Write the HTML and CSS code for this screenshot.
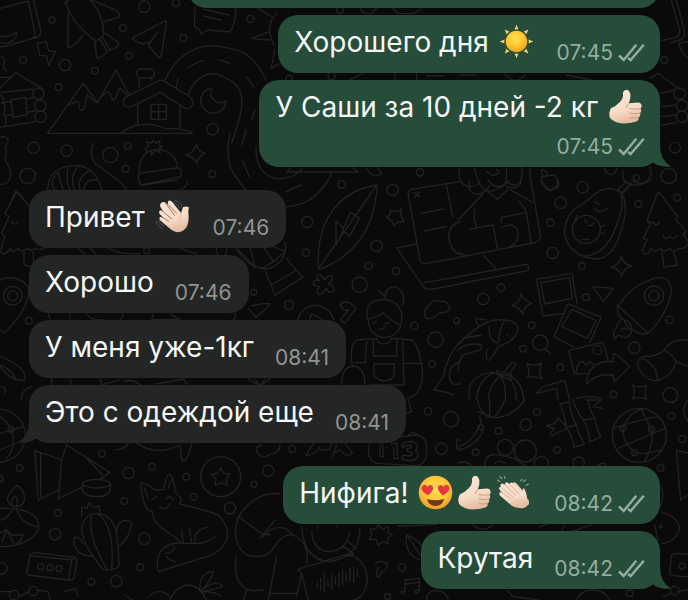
FILE: index.html
```html
<!DOCTYPE html>
<html lang="ru">
<head>
<meta charset="utf-8">
<meta name="viewport" content="width=device-width, initial-scale=1">
<title>Чат</title>
<link rel="stylesheet" href="styles.css">
</head>
<body>

<!-- Wallpaper doodles, grouped by region; each group is drawn on a 3x grid -->
<svg class="wallpaper" viewBox="0 0 688 600" preserveAspectRatio="xMidYMin slice" aria-hidden="true">
<g transform="scale(.3333)">
<path d="M0 25L85 3L105 100Q107 112 95 116L20 138Q5 142 0 138M100 0L122 90Q124 110 108 113L90 118M0 108Q30 115 50 95Q50 125 20 130L0 128M111 130L138 124L146 152L166 154L147 197L139 168L120 166Z"/>
<path d="M197 0Q205 60 285 122M310 100Q310 40 270 0M205 40L203 140Q215 150 250 105M275 0L350 32Q365 45 355 52L310 66M285 125L290 172Q300 178 322 155L300 118M308 112L330 152M318 100L355 128Q358 145 328 150M285 122Q300 122 314 100M195 10L208 0"/>
<path d="M497 62L398 113Q398 122 430 132L450 125L472 98L445 135L475 172Q483 172 485 162L499 68Q500 62 497 62M585 20L583 80Q590 85 598 88L603 102L625 90L690 96M612 28L686 45M610 48L662 60"/>
<path d="M142 400L250 250L293 308L348 210L388 285M205 315L220 310Q240 295 237 325Q245 335 252 325L262 285Q275 300 293 308M305 290Q322 270 330 280Q338 310 346 295L360 265L385 288M142 400H578Q550 382 500 387Q440 360 385 385L360 400"/>
<rect x="410" y="207" width="53" height="27" rx="12"/><path d="M417 235V262M455 235V242M475 243Q485 238 500 248L570 290Q588 310 570 324Q560 330 545 318L480 277L395 320Q375 325 370 308Q368 295 385 287ZM413 313V375M540 318V382M453 313H499V358H453ZM476 313V358M453 335H499"/>
<path d="M495 240Q540 140 640 137L690 145M565 285Q590 215 650 222L690 240M565 203Q590 185 612 182M660 180L690 190M535 235L528 262M630 265A38 38 0 1 0 678 302A28 28 0 0 1 637 265"/>
<path d="M0 265L47 218L130 268M0 232H33M0 278L98 267M0 382L107 365M5 310L35 303M78 298L100 293M15 347L40 343M82 337L105 333M33 300L76 292L82 343L40 352ZM5 170Q20 180 10 195Q10 205 20 212M0 285Q15 290 8 308Q22 320 10 342Q25 355 15 375"/>
<path d="M0 412Q25 405 25 425Q10 440 20 455Q10 475 22 490Q40 520 25 545Q15 555 0 552M35 600L47 573L72 600M280 430Q265 460 285 490L340 530Q370 550 380 570M690 400Q678 450 690 500"/>
<path d="M143 570Q145 495 235 497Q290 505 305 570M165 570Q145 545 175 517Q180 545 190 570M205 500Q195 540 210 570M238 497Q205 530 225 570M270 512Q230 530 240 570M290 540Q255 535 252 570"/>
<path d="M417 515Q418 450 475 448Q530 455 532 505M417 520L535 503Q548 508 543 530L425 555Q412 550 417 520M437 445L447 438L440 425L456 430L460 420L468 430L480 422L478 435L488 440L476 446L480 458L465 452L455 465L452 452L440 456ZM540 570Q560 560 563 545M590 432Q592 455 616 460Q595 468 590 490Q580 468 557 465Q582 458 590 432"/>
<circle cx="115" cy="281" r="17"/><circle cx="121" cy="317" r="17"/><circle cx="122" cy="350" r="17"/><circle cx="156" cy="60" r="9"/><circle cx="369" cy="84" r="10"/><circle cx="433" cy="20" r="17"/><circle cx="528" cy="8" r="11"/><circle cx="550" cy="114" r="10"/><circle cx="387" cy="167" r="10"/><circle cx="69" cy="180" r="10"/><circle cx="195" cy="195" r="17"/><circle cx="285" cy="212" r="10"/><circle cx="176" cy="262" r="10"/><circle cx="101" cy="443" r="17"/><circle cx="200" cy="452" r="17"/><circle cx="383" cy="437" r="10"/><circle cx="331" cy="465" r="23"/><circle cx="377" cy="506" r="10"/><circle cx="83" cy="528" r="23"/><circle cx="638" cy="388" r="17"/><circle cx="637" cy="522" r="10"/>
</g>
<g transform="translate(230) scale(.3333)">
<path d="M18 25Q15 80 0 95M85 25L125 50M118 95L65 115L118 120M135 150L123 205L150 190M140 40Q100 80 135 140M0 145Q70 155 108 240M0 240Q50 270 30 350L5 430M50 230L70 260M75 330L65 360M48 390L36 435M38 480L58 530M168 575L215 555M78 440Q75 520 140 537Q200 535 215 505M0 500Q30 560 80 600M305 518Q290 560 240 600M170 516H385L365 500M170 516L185 500"/>
<path d="M410 505Q430 540 455 520L440 500M360 240L400 220M495 218V240M560 220V240M590 228H640M390 25Q400 45 425 40L440 25M490 25Q500 45 520 40Q560 45 572 25"/>
<circle cx="61" cy="57" r="11"/><circle cx="570" cy="517" r="11"/><circle cx="177" cy="235" r="9"/><circle cx="305" cy="228" r="11"/><circle cx="330" cy="30" r="10"/>
</g>
<g transform="translate(458) scale(.3333)">
<path d="M640 0L665 90Q668 110 650 113L612 122M655 0L680 95Q680 115 665 120L640 128M690 125L663 130Q670 160 690 175M575 235L600 220L665 268M608 280L650 270M612 375L655 368M610 350L655 345M612 320L655 315"/>
<path d="M495 510Q490 550 520 555Q570 560 580 520L575 500M520 550L490 585M250 530L290 525Q308 550 300 560L275 573Q250 560 250 530M255 528L250 510Q262 505 268 525M5 500Q-5 550 30 560Q60 560 65 545M50 505Q70 600 120 565Q150 560 145 505M145 545Q180 570 190 535Q200 500 180 500M215 500L218 540M85 515L95 520M115 510L125 515M100 525Q110 530 120 520M325 225L400 240M140 220Q170 260 200 225M5 225H55"/>
<circle cx="535" cy="533" r="9"/><circle cx="619" cy="180" r="10"/><circle cx="665" cy="281" r="17"/><circle cx="672" cy="317" r="17"/><circle cx="672" cy="350" r="17"/><circle cx="651" cy="443" r="16"/><circle cx="632" cy="528" r="23"/><circle cx="458" cy="505" r="18"/>
</g>
<g transform="translate(0 180) scale(.3333)">
<path d="M50 35L15 100Q25 112 28 108L5 160L15 170Q-5 220 10 222Q25 220 30 205Q40 225 55 205Q65 222 80 205Q90 215 105 205Q125 215 135 200M50 35Q60 40 88 80M35 125Q45 140 55 125M72 215V255L100 262V215M0 300Q50 280 85 320Q95 380 12 460L0 450M0 530Q80 560 75 600Q40 610 0 560M0 555Q30 565 50 600M0 620Q20 620 15 640M65 660Q60 630 95 620M415 0L425 15L530 0"/>
<path d="M235 205L255 225M270 205L290 225M325 205Q360 225 420 220M540 205L590 222M145 400L150 418M210 400V418M260 402Q275 425 310 418M370 400L362 420M460 405L455 418H540L510 402M155 595V617M210 597L215 615M300 597L305 615L360 600M370 605Q400 595 420 615M470 612L550 597L560 612"/>
<circle cx="38" cy="347" r="28"/><circle cx="38" cy="347" r="15"/><circle cx="87" cy="422" r="10"/><circle cx="440" cy="212" r="9"/><circle cx="665" cy="212" r="16"/>
</g>
<g transform="translate(230 180) scale(.3333)">
<path d="M438 15Q300 40 270 180Q262 240 265 262Q270 270 285 262Q420 200 438 50Q444 20 438 15M438 18L268 262M318 122L340 145L362 97L388 115L358 170L340 150L318 195ZM482 90Q497 100 515 87Q507 105 522 125Q503 122 492 138Q488 120 468 112Q484 108 482 90M552 38L570 50M567 36L555 52"/>
<path d="M690 5L545 28Q532 32 535 45L570 240Q575 252 590 250L690 232M648 8L668 110M570 100L642 87M582 153L648 140M690 125Q655 135 657 175Q660 210 690 225M560 192L500 204L582 322Q590 330 605 328L690 312M582 308L690 290M170 80Q250 75 295 0M170 35L212 15"/>
<path d="M15 200Q60 275 120 265Q175 240 165 185M60 200L75 262M100 200L130 245M130 200L165 215L130 245L95 265M25 210L75 262M105 270L135 345L218 292L168 235M125 315L200 270M262 285Q275 280 282 300Q300 280 308 292Q308 305 295 312Q315 320 312 332Q300 345 288 325Q275 350 263 340Q258 328 270 320Q250 318 250 308Q252 298 268 302Q258 292 262 285M165 365Q180 358 190 368Q190 385 180 388Q165 388 163 378ZM65 378Q90 370 120 370Q110 390 75 412M55 385L78 412M15 395Q20 410 10 420M204 420A54 54 0 0 1 310 420M240 418L243 402L278 418M330 375Q340 360 360 370L378 385L345 428Q335 430 332 418L355 390Q340 395 330 375"/>
<path d="M413 418Q400 360 460 358Q520 365 515 420Q510 470 460 473Q415 465 415 418Q445 410 460 398Q480 420 510 435M465 355Q465 320 495 320Q530 335 518 375M445 330L465 350M428 430L440 425M465 432L478 427M445 445Q455 455 465 440M440 472Q440 492 462 492Q485 490 485 472M440 475L380 480Q355 500 368 560M485 475L545 480Q570 500 578 580Q575 650 530 655M430 478V528H500V480M410 485L405 550M518 485L522 615M432 552H493V580Q490 602 462 603Q435 600 432 580ZM335 615Q335 560 370 558Q405 562 405 615M372 548H405M522 550H578M420 615H520"/>
<path d="M590 415Q575 395 595 380Q605 355 630 365Q655 360 660 385Q650 400 630 398Q610 420 590 415M690 485Q650 530 640 590L612 630Q650 635 672 645M690 545Q650 560 660 600Q670 620 690 610M55 597L90 617L120 597M75 597L90 617L105 597"/>
<circle cx="335" cy="13" r="11"/><circle cx="488" cy="30" r="17"/><circle cx="232" cy="126" r="17"/><circle cx="440" cy="198" r="17"/><circle cx="228" cy="218" r="11"/><circle cx="415" cy="257" r="11"/><circle cx="498" cy="273" r="11"/><circle cx="389" cy="314" r="23"/><circle cx="71" cy="337" r="9"/><circle cx="553" cy="437" r="11"/><circle cx="617" cy="479" r="23"/><circle cx="606" cy="551" r="10"/><circle cx="680" cy="422" r="9"/>
</g>
<g transform="translate(458 180) scale(.3333)">
<path d="M35 0Q25 50 70 40Q90 30 95 15M90 0Q120 40 155 0M145 20Q190 30 190 0M90 35L118 58L150 28M75 42L0 120M155 28L225 68M218 0L248 170Q245 185 230 188L0 232M50 85Q45 120 55 140M35 148L105 135L118 205M130 130V112L205 98L220 190M180 62Q200 80 205 98M128 145Q165 120 180 155Q180 190 160 197M75 225L115 268M0 290L205 253Q215 258 210 272L0 312M0 215Q10 225 30 228M250 5L275 32L300 15L298 0"/>
<path d="M430 30Q480 15 498 55Q510 90 490 150Q465 240 410 237Q330 225 320 160Q320 100 370 75Q400 50 430 30M490 45Q500 80 470 150Q440 225 380 228M410 65L425 75M410 85Q425 105 448 85M380 120L388 128M392 135Q400 142 408 128M430 140L440 135M430 158L440 162M372 178H395M350 125L358 105M478 30L505 5L520 12L492 38ZM520 0Q545 20 580 0M612 0Q630 20 655 0"/>
<path d="M600 35L568 120Q570 130 580 128L555 175L568 180Q545 215 560 222Q575 220 580 205Q590 222 605 205Q620 220 635 205Q650 222 662 205Q680 210 690 190M600 35Q615 50 660 112L652 118L685 155L675 160L690 185M585 125Q595 145 605 125M615 165Q622 185 635 168Q645 185 658 165M612 215L618 262L658 255L645 212"/>
<path d="M490 228Q495 252 521 258Q497 264 491 290Q485 265 461 261Q487 252 490 228M190 342Q197 362 221 370Q198 378 194 402Q185 382 163 377Q187 366 190 342M207 552Q230 560 250 550Q240 575 252 597Q230 585 208 593Q218 575 207 552M524 615Q545 625 566 616Q556 635 566 658Q545 648 524 657Q534 635 524 615"/>
<path d="M235 298L342 280L357 370M235 298L255 408L318 400M248 308L335 293L343 355L260 372ZM330 372L430 412L395 488M330 372L288 470L345 500M342 388L415 422L388 475L312 440ZM332 512L430 487Q440 490 450 540M332 512L350 582L385 580M355 575Q360 540 375 545L385 555L395 545L410 555M465 522Q475 518 515 560L470 605L465 585Q415 580 385 612Q390 540 465 545ZM403 320L465 325L437 365Z"/>
<path d="M478 385Q520 310 600 293Q640 290 640 335Q625 410 570 460Q545 465 530 452Q510 450 498 420Q475 410 478 375L570 460M490 420Q475 430 478 440Q460 460 470 477Q480 460 490 470Q510 480 520 455Q525 430 500 420M490 450Q500 440 510 450M618 510Q640 475 690 480M618 510Q600 530 555 530Q530 540 545 570Q570 610 605 600Q640 590 655 545Q640 520 618 510M555 535Q600 560 598 600M655 545L690 560"/>
<path d="M0 495Q60 430 110 420Q180 415 180 450Q170 485 120 500Q100 540 90 542Q80 530 88 508M85 420L55 415Q50 425 62 435M140 422Q125 440 122 485Q110 495 95 465L92 440M0 510Q30 485 70 495Q75 510 60 512L15 525Q0 545 0 570M15 475L70 465M146 466L148 467M262 508L278 522M35 660Q20 590 100 577L160 590Q195 610 197 660M55 660Q60 600 105 580M90 660Q95 610 125 590M130 592Q145 620 142 660M155 595Q175 620 175 660M115 572L160 585L158 600L120 585ZM140 575L160 548Q172 545 172 555L155 580M235 640L255 620L320 602L335 660M235 640L295 625L300 660M355 655Q390 645 430 655"/>
<circle cx="385" cy="148" r="42"/><circle cx="588" cy="347" r="29"/><circle cx="588" cy="347" r="15"/><circle cx="418" cy="510" r="13"/><circle cx="247" cy="488" r="23"/><circle cx="374" cy="22" r="17"/><circle cx="308" cy="68" r="17"/><circle cx="541" cy="72" r="10"/><circle cx="657" cy="53" r="10"/><circle cx="277" cy="128" r="11"/><circle cx="284" cy="219" r="17"/><circle cx="372" cy="258" r="10"/><circle cx="129" cy="323" r="11"/><circle cx="76" cy="357" r="17"/><circle cx="384" cy="352" r="10"/><circle cx="221" cy="436" r="10"/><circle cx="195" cy="506" r="10"/><circle cx="635" cy="420" r="11"/><circle cx="529" cy="503" r="17"/><circle cx="307" cy="562" r="10"/><circle cx="467" cy="643" r="10"/><circle cx="637" cy="645" r="22"/>
</g>
<g transform="translate(0 400) scale(.3333)">
<path d="M0 100L70 80M35 90Q20 60 0 50M35 95Q50 140 20 175M0 150L70 120M105 152L185 180M105 152L115 300L175 270M122 160V290M185 180L175 297L245 262M185 180L200 135L330 218L300 238M260 175L308 225M247 250Q250 240 290 238Q330 240 331 250Q330 262 290 264Q250 262 247 250V270Q255 290 290 290Q325 290 331 270V250"/>
<path d="M48 258Q15 290 25 305Q35 325 60 318Q85 300 65 270Q60 258 48 258M35 310Q35 290 48 290Q55 300 50 318M0 325Q60 320 100 345Q125 370 112 395Q80 440 0 440M50 325Q60 370 112 380M40 325Q20 360 0 360M0 400L20 388L35 405L70 405Q60 435 30 440M5 425L20 390L40 430M90 465Q95 458 105 458L225 472Q232 475 230 485L222 535Q215 542 205 540L85 525Q78 520 82 510ZM90 467L215 480L205 540M215 480L228 473"/>
<path d="M245 395Q245 345 290 340Q340 345 350 400L358 495Q350 512 310 510Q285 480 255 430ZM275 350Q260 400 320 508M295 343Q345 380 335 508M350 390Q355 365 372 362Q395 360 395 375Q385 420 355 440M248 430Q240 408 225 412Q215 430 235 455Q255 470 280 468M245 350V320Q255 322 260 325L268 308L280 322L298 318L300 340"/>
<path d="M422 248Q425 300 442 330L458 335Q455 370 520 408L545 430M422 248Q450 255 465 270L492 268Q495 230 510 222Q525 240 525 275L545 298L538 312Q600 325 655 345Q690 380 680 420Q660 460 620 470L475 515Q465 470 490 445Q515 425 560 430H610M505 265Q510 245 515 240M432 262Q440 285 445 295M455 298L470 290M500 295Q515 285 520 300M480 322Q500 335 510 310M545 390L550 430M568 385L575 430M585 430Q580 390 620 382M495 460Q520 460 525 440M500 470Q515 485 528 485M600 430Q640 420 645 408"/>
<path d="M662 203L670 220L690 222L678 236L682 256L664 247L645 256L648 237L634 223L654 220ZM510 600Q530 555 570 555Q600 560 620 600M445 590Q480 560 510 590M600 570Q595 520 640 515Q630 550 605 570Q650 535 668 560Q640 570 605 575Q650 575 665 590M0 575H30M56 590L88 575M112 570L145 575L150 600M195 575L225 565L235 590M375 585L395 600M350 150Q380 145 385 130M410 130Q470 170 540 135L545 180Q560 195 575 130"/>
<circle cx="-3" cy="107" r="79"/><circle cx="33" cy="88" r="9"/><circle cx="662" cy="230" r="60"/><circle cx="42" cy="585" r="14"/><circle cx="100" cy="573" r="14"/><circle cx="122" cy="500" r="9"/><circle cx="150" cy="503" r="9"/><circle cx="177" cy="506" r="9"/><circle cx="306" cy="161" r="10"/><circle cx="386" cy="219" r="17"/><circle cx="456" cy="200" r="10"/><circle cx="59" cy="204" r="10"/><circle cx="0" cy="237" r="9"/><circle cx="559" cy="230" r="10"/><circle cx="581" cy="290" r="10"/><circle cx="373" cy="303" r="10"/><circle cx="174" cy="338" r="10"/><circle cx="165" cy="403" r="17"/><circle cx="433" cy="416" r="17"/><circle cx="421" cy="502" r="10"/><circle cx="274" cy="545" r="10"/><circle cx="349" cy="544" r="17"/><circle cx="5" cy="505" r="17"/><circle cx="690" cy="325" r="17"/>
</g>
<g transform="translate(230 400) scale(.3333)">
<path d="M80 155Q75 140 95 135M80 155Q95 180 115 165Q150 160 150 135M228 165L250 130M228 165Q250 170 270 140M270 150L300 148L305 130M305 175L320 135M345 130L368 160L350 168L330 150L310 160M415 150Q415 120 440 118L560 105Q590 110 590 140L588 175Q580 195 560 197L440 190Q415 185 415 150M535 105Q550 90 565 107M530 40L545 35L535 0M690 120H680V145H690M445 130L457 125L460 170H450V138M470 142V143M470 160V161M485 132L500 128L504 176H492V142M515 133Q545 115 562 135Q565 145 555 150Q570 160 562 173Q545 190 515 176L520 165Q540 172 548 163Q548 156 532 154V145Q548 145 545 138Q535 132 520 142Z"/>
<path d="M25 350Q80 270 150 282M25 350L95 400L120 405M25 350Q0 430 50 465Q110 480 130 445Q155 400 190 405Q240 430 230 490M100 410Q130 375 165 385L190 405M140 470L115 600M20 470Q5 540 50 568L70 572L100 570M115 580H200M50 570L40 600M135 360L90 415"/>
<path d="M215 380Q220 480 300 485Q390 470 390 385M245 395Q250 455 300 455Q350 450 358 398M340 440L370 460Q360 475 345 465M355 425L378 445M265 385L262 375M320 385L325 375M203 508L355 462Q410 480 412 540Q405 595 370 600M203 508L215 520L235 600M200 590L215 520"/>
<path d="M262 548V562M272 535V570M283 520V575M294 540V558M305 525V565M316 532V552M327 518V560M338 510V555M349 522V543M360 505V545M371 500V548M382 510V530"/>
<path d="M420 385L435 388L445 375L458 388L475 380V398L487 405L472 415L475 430L458 425L445 435L438 418H418L425 403ZM530 405Q520 460 570 480M530 405Q570 420 582 450M530 405L575 470M505 378L620 374M435 490Q455 478 470 490Q475 510 455 515L448 532L438 528L445 500M525 575V540L568 535V572M525 552L568 547M525 575Q512 570 513 580Q520 585 525 575M568 572Q553 568 555 578Q563 582 568 572M590 600Q590 570 620 572Q650 575 655 600"/>
<circle cx="187" cy="147" r="10"/><circle cx="115" cy="212" r="17"/><circle cx="72" cy="253" r="9"/><circle cx="634" cy="146" r="17"/><circle cx="594" cy="34" r="11"/><circle cx="663" cy="58" r="23"/><circle cx="516" cy="502" r="11"/><circle cx="473" cy="590" r="9"/>
</g>
<g transform="translate(458 400) scale(.3333)">
<path d="M60 0Q60 30 90 50Q150 65 200 0M95 0V45M140 0Q130 30 110 50M60 35L105 52M65 50L70 70L60 85Q40 130 0 140M75 90Q60 135 0 152M80 198Q80 165 110 163L170 175L200 198M0 190Q20 180 40 195M110 190Q120 175 140 190M420 198Q435 180 445 198"/>
<path d="M305 12L335 5Q335 40 355 75L325 82Q320 40 305 12M325 82Q345 110 348 142L380 132Q360 100 355 75M345 0Q350 20 375 60L410 55Q395 30 390 0M375 60Q395 90 395 125L428 112Q415 80 410 55M325 78L300 55L290 70L265 78L290 85Q270 105 280 108L325 85M385 0H430L405 20L435 25"/>
<path d="M480 145Q560 110 622 85M467 85Q540 60 600 50M495 85Q510 40 550 27M495 85Q490 120 530 158M580 88Q560 50 550 27M580 88Q590 130 560 185M530 158Q570 165 610 150M655 150L690 160M655 150L668 300L690 285M690 0Q665 30 690 65M620 0Q640 15 655 0"/>
<path d="M608 335Q660 350 665 385Q655 425 612 430M590 375L600 420M610 260Q620 290 608 320M640 465Q645 458 690 462M640 465L635 520Q640 530 690 530M150 572L165 590L240 600M355 600Q370 570 405 570Q440 570 455 600M45 375Q75 400 105 375M245 380L270 372M310 395L320 375M340 395L400 375M615 590L640 580M660 575L690 568"/>
<circle cx="544" cy="106" r="81"/><circle cx="495" cy="85" r="9"/><circle cx="580" cy="88" r="9"/><circle cx="530" cy="158" r="9"/><circle cx="68" cy="82" r="8"/><circle cx="237" cy="36" r="10"/><circle cx="203" cy="74" r="17"/><circle cx="122" cy="93" r="10"/><circle cx="142" cy="142" r="24"/><circle cx="202" cy="153" r="33"/><circle cx="297" cy="150" r="10"/><circle cx="53" cy="157" r="10"/><circle cx="640" cy="48" r="10"/><circle cx="673" cy="117" r="11"/><circle cx="608" cy="204" r="10"/><circle cx="362" cy="188" r="17"/><circle cx="250" cy="192" r="22"/><circle cx="672" cy="498" r="9"/><circle cx="650" cy="572" r="13"/><circle cx="515" cy="580" r="10"/><circle cx="608" cy="380" r="4"/>
</g>
</svg>

<!-- Shared symbols -->
<svg class="defs" aria-hidden="true">
<defs>
<radialGradient id="sunFill" cx=".45" cy=".35" r=".7"><stop offset="0" stop-color="#ffe04f"/><stop offset=".6" stop-color="#fdc32c"/><stop offset="1" stop-color="#e8921c"/></radialGradient>
<radialGradient id="faceFill" cx=".5" cy=".4" r=".6"><stop offset="0" stop-color="#ffe14f"/><stop offset=".65" stop-color="#fdc437"/><stop offset="1" stop-color="#ee9a2b"/></radialGradient>
<linearGradient id="skin" x1="0" y1="0" x2=".3" y2="1"><stop offset="0" stop-color="#fbe6d6"/><stop offset=".65" stop-color="#f7dcc9"/><stop offset="1" stop-color="#e6bda3"/></linearGradient>
</defs>
<symbol id="sun" viewBox="21 26 104 104">
<g fill="#f6d477"><path id="ray" d="M73 28L79 43Q73 40 67 43Z"/><use href="#ray" transform="rotate(45 73 78)"/><use href="#ray" transform="rotate(90 73 78)"/><use href="#ray" transform="rotate(135 73 78)"/><use href="#ray" transform="rotate(180 73 78)"/><use href="#ray" transform="rotate(225 73 78)"/><use href="#ray" transform="rotate(270 73 78)"/><use href="#ray" transform="rotate(315 73 78)"/></g>
<circle cx="73" cy="78" r="32" fill="url(#sunFill)"/>
</symbol>
<symbol id="thumb" viewBox="350 220 102 106">
<path fill="url(#skin)" d="M393 231Q397 221 405 222Q413 224 416 237Q417 250 411 263L438 261Q450 262 450 272Q450 277 446 280Q452 286 445 293Q448 302 441 306Q442 316 431 319Q411 326 386 324Q364 320 354 308Q349 290 357 278Q373 271 384 259Q396 247 393 231Z"/>
<path fill="none" stroke="#d09a7d" stroke-width="3" stroke-linecap="round" d="M414 279Q430 283 447 280M414 293Q430 297 445 293M414 307Q429 310 441 306M412 263Q405 268 404 276"/>
</symbol>
<symbol id="love" viewBox="29 17 102 102">
<circle cx="80" cy="68" r="49" fill="url(#faceFill)"/>
<path fill="#e5393f" d="M59 76Q39 67 39 54Q42 43 52 46L56 51Q63 43 71 48Q78 59 59 76Z"/>
<path fill="#e5393f" d="M101 76Q121 67 121 54Q118 43 108 46L104 51Q97 43 89 48Q82 59 101 76Z"/>
<path fill="#71391b" d="M55 87Q80 94 105 87Q101 107 80 107Q59 107 55 87Z"/>
</symbol>
<symbol id="clap" viewBox="263 12 104 108">
<path fill="none" stroke="#819c90" stroke-width="4" stroke-linecap="round" d="M266 28L273 32M273 17L279 23M287 16L288 22M341 25L338 30M352 27L346 32M361 41L354 43"/>
<path fill="#f1cdb5" d="M311 39Q318 30 326 40L343 60Q344 48 350 57L357 84Q366 96 361 104L340 115Z"/>
<path fill="url(#skin)" d="M275 42Q279 35 286 41L289 43Q288 30 298 36L303 40Q306 31 315 39L345 66Q344 54 351 61Q356 70 355 83Q366 91 361 102Q351 117 335 114Q316 113 305 103L273 75Q268 67 275 65L279 67L272 57Q267 49 275 49Z"/>
<path fill="none" stroke="#d69d83" stroke-width="2.5" stroke-linecap="round" d="M279 65L304 84M275 49L313 80M287 41L321 74M303 40L330 68"/>
</symbol>
<symbol id="wave" viewBox="458 55 110 108">
<path fill="none" stroke="#56514d" stroke-width="3" stroke-linecap="round" d="M519 58Q537 63 543 78M515 65Q530 70 535 82M461 124Q466 140 482 148M469 121Q474 133 486 139"/>
<path fill="url(#skin)" d="M478 66Q485 60 493 67L500 73Q495 59 504 59Q511 60 517 70L540 98Q542 90 546 80Q555 74 565 81Q562 88 563 99Q567 140 547 153Q528 165 509 151L474 121Q469 114 475 110L486 115L472 100Q468 91 476 89L484 94L475 79Q472 71 478 66Z"/>
<path fill="none" stroke="#99705b" stroke-width="3" stroke-linecap="round" d="M486 114L501 124M481 92L510 116M492 68L519 105M501 73L526 99"/>
<path fill="none" stroke="#dcab91" stroke-width="2.5" stroke-linecap="round" d="M540 98Q542 108 535 116"/>
</symbol>
<symbol id="read" viewBox="0 0 27 18"><path fill="none" stroke="currentColor" stroke-width="2.5" d="M1 11.5L5.7 16L18.3 .8M10 14L12.6 16L25.8 .8"/></symbol>
<symbol id="tail" viewBox="0 0 24 24"><path fill="currentColor" d="M0 0H13V2Q13 17 24 23.5Q14 25 6 19.5L0 14Z"/></symbol>
</svg>

<main class="chat">
  <section class="group">
    <div class="bubble out previous" aria-hidden="true"></div>
    <article class="bubble out">
      <p class="text">Хорошего дня <svg class="emoji" role="img" aria-label="☀️"><use href="#sun"/></svg></p>
      <footer class="meta"><time>07:45</time><svg class="read"><use href="#read"/></svg></footer>
    </article>
    <article class="bubble out stacked">
      <p class="text">У Саши за 10 дней -2 кг <svg class="emoji" role="img" aria-label="👍🏻"><use href="#thumb"/></svg></p>
      <footer class="meta"><time>07:45</time><svg class="read"><use href="#read"/></svg></footer>
      <svg class="tail"><use href="#tail"/></svg>
    </article>
  </section>

  <section class="group">
    <article class="bubble in">
      <p class="text">Привет <svg class="emoji" role="img" aria-label="👋🏻"><use href="#wave"/></svg></p>
      <footer class="meta"><time>07:46</time></footer>
    </article>
    <article class="bubble in">
      <p class="text">Хорошо</p>
      <footer class="meta"><time>07:46</time></footer>
    </article>
    <article class="bubble in">
      <p class="text">У меня уже-1кг</p>
      <footer class="meta"><time>08:41</time></footer>
    </article>
    <article class="bubble in">
      <p class="text">Это с одеждой еще</p>
      <footer class="meta"><time>08:41</time></footer>
      <svg class="tail"><use href="#tail"/></svg>
    </article>
  </section>

  <section class="group">
    <article class="bubble out">
      <p class="text">Нифига! <svg class="emoji" role="img" aria-label="😍"><use href="#love"/></svg><svg class="emoji" role="img" aria-label="👍🏻"><use href="#thumb"/></svg><svg class="emoji" role="img" aria-label="👏🏻"><use href="#clap"/></svg></p>
      <footer class="meta"><time>08:42</time><svg class="read"><use href="#read"/></svg></footer>
    </article>
    <article class="bubble out">
      <p class="text">Крутая</p>
      <footer class="meta"><time>08:42</time><svg class="read"><use href="#read"/></svg></footer>
      <svg class="tail"><use href="#tail"/></svg>
    </article>
  </section>
</main>
</body>
</html>
```

FILE: styles.css
```css
* {
  box-sizing: border-box;
}

body {
  margin: 0;
  min-height: 100vh;
  position: relative;
  overflow-x: hidden;
  background: #0a0a0a;
  color: #f4f7f5;
  font-family: Inter, "Liberation Sans", sans-serif;
}

.wallpaper {
  position: absolute;
  inset: 0;
  width: 100%;
  height: 100%;
  fill: none;
  stroke: #222222;
  stroke-width: 4;
  stroke-linecap: round;
  stroke-linejoin: round;
}

.defs {
  position: absolute;
  width: 0;
  height: 0;
}

.chat {
  position: relative;
  display: flex;
  flex-direction: column;
  gap: 23px;
  padding: 0 28px 11px 29px;
}

.group {
  display: flex;
  flex-direction: column;
  gap: 7px;
}

.bubble {
  position: relative;
  display: flex;
  align-items: flex-end;
  gap: 21px;
  min-height: 58px;
  padding: 9px 17px 8px 16px;
  border-radius: 20px;
}

.out {
  align-self: flex-end;
  padding-right: 15px;
  background: #264c3a;
}

.in {
  align-self: flex-start;
  background: #242626;
}

.previous {
  width: 75%;
  margin-top: -50px;
}

.stacked {
  flex-direction: column;
  gap: 5px;
}

.text {
  margin: 0 0 5px;
  font-size: 28px;
  line-height: 36px;
  white-space: nowrap;
}

.emoji {
  width: 35px;
  height: 35px;
  margin: 0 2px;
  vertical-align: -7px;
}

.meta {
  display: flex;
  align-items: center;
  gap: 5px;
  font-size: 21px;
  line-height: 24px;
  color: #929393;
}

.out .meta {
  color: #94ada0;
}

.read {
  width: 27px;
  height: 18px;
}

.tail {
  position: absolute;
  right: -11px;
  bottom: 0;
  width: 24px;
  height: 24px;
  color: #264c3a;
}

.in .tail {
  right: auto;
  left: -11px;
  color: #242626;
  transform: scaleX(-1);
}
```
